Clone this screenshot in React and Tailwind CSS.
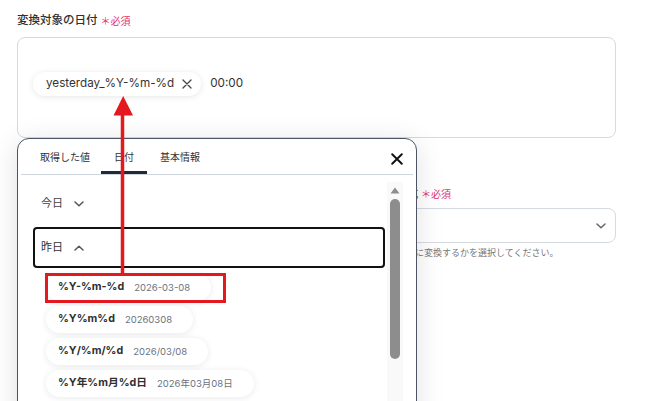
import React from "react";

const Chevron = ({ up = false, className = "" }) => (
  <svg width="10" height="6" viewBox="0 0 10 6" fill="none" className={className}>
    <path
      d={up ? "M1 5L5 1.2L9 5" : "M1 1L5 4.8L9 1"}
      stroke="currentColor"
      strokeWidth="1.5"
      strokeLinecap="round"
      strokeLinejoin="round"
    />
  </svg>
);

const XIcon = ({ size = 10, sw = 1.4, className = "" }) => (
  <svg width={size} height={size} viewBox="0 0 10 10" fill="none" className={className}>
    <path d="M1 1L9 9M9 1L1 9" stroke="currentColor" strokeWidth={sw} strokeLinecap="round" />
  </svg>
);

const items = [
  ["%Y-%m-%d", "2026-03-08"],
  ["%Y%m%d", "20260308"],
  ["%Y/%m/%d", "2026/03/08"],
  ["%Y年%m月%d日", "2026年03月08日"],
];

export default function App() {
  return (
    <div className="relative w-[664px] h-[401px] overflow-hidden bg-white font-['Inter','Noto_Sans_CJK_JP',sans-serif] text-[#333]">
      {/* background form */}
      <div className="pl-[17px] pt-[13px]">
        <div className="flex items-center h-[16px] gap-[3px]">
          <span className="text-[11.5px] font-medium text-[#2f2f2f] leading-none">変換対象の日付</span>
          <span className="text-[10px] text-[#e5336c] leading-none">＊必須</span>
        </div>
        <div className="mt-[8px] w-[599px] h-[101px] rounded-[8px] border border-[#d5d9e0] flex items-start pt-[34px] pl-[15px]">
          <div className="flex items-center h-[24px] rounded-full bg-white pl-[13px] pr-[9px] shadow-[0_1px_6px_rgba(0,0,0,0.1)]">
            <span className="text-[11.7px] leading-none text-[#333]">yesterday_%Y-%m-%d</span>
            <XIcon size={10} sw={1.3} className="ml-[8px] text-[#444]" />
          </div>
          <span className="ml-[9px] h-[24px] flex items-center text-[11.7px] leading-none text-[#333]">00:00</span>
        </div>

        <div className="mt-[48px] flex items-center h-[16px] gap-[3px] pl-[313px]">
          <span className="text-[11px] font-medium text-[#333] leading-none">変換後の日付形式</span>
          <span className="text-[10px] text-[#e5336c] leading-none">＊必須</span>
        </div>
        <div className="mt-[6px] w-[599px] h-[35px] rounded-[8px] border border-[#d5d9e0] flex items-center justify-end pr-[9px]">
          <Chevron className="text-[#666]" />
        </div>
        <div className="mt-[5px] pl-[335px] text-[9px] leading-[10px] text-[#777]">
          日付をどの形式に変換するかを選択してください。
        </div>
      </div>

      {/* popup */}
      <div className="absolute left-[17px] top-[138px] w-[400px] h-[290px] rounded-[12px] border border-[#4b5563] bg-white shadow-[0_4px_28px_rgba(0,0,0,0.12)]">
        <div className="flex h-[35px] pl-[9px] pt-[5px]">
          <div className="w-[74px] pl-[13px] flex items-center border-b-[3px] border-transparent text-[10px] text-[#333]">
            取得した値
          </div>
          <div className="w-[46px] flex items-center justify-center border-b-[3px] border-[#1f2937] text-[10px] text-[#333]">
            日付
          </div>
          <div className="pl-[13px] flex items-center border-b-[3px] border-transparent text-[10px] text-[#333]">
            基本情報
          </div>
        </div>
        <div className="mx-[3px] h-px bg-[#cfd5dd]" />
        <div className="absolute right-[13px] top-[14px] text-[#111]">
          <XIcon size={12} sw={1.6} />
        </div>

        <div className="flex">
          <div className="w-[352px] ml-[15px] pt-[8px]">
            <div className="h-[41px] rounded-[4px] border-2 border-transparent px-[6px] flex items-center gap-[11px]">
              <span className="text-[11px] text-[#444] leading-none">今日</span>
              <Chevron className="text-[#555]" />
            </div>
            <div className="mt-[3px] h-[41px] rounded-[4px] border-2 border-[#111] px-[6px] flex items-center gap-[11px]">
              <span className="text-[11px] text-[#333] leading-none">昨日</span>
              <Chevron up className="text-[#555]" />
            </div>
            <div className="mt-[6px] ml-[13px] flex flex-col items-start gap-[5px]">
              {items.map(([fmt, val]) => (
                <div
                  key={fmt}
                  className="h-[27px] flex items-center rounded-full bg-white pl-[12px] pr-[21px] gap-[10px] shadow-[0_1px_7px_rgba(0,0,0,0.09)]"
                >
                  <span className="text-[10.7px] font-bold text-[#2f2f2f] leading-none">{fmt}</span>
                  <span className="text-[9.5px] text-[#6b7280] leading-none">{val}</span>
                </div>
              ))}
            </div>
          </div>
          <div className="ml-[2px] mt-[7px] w-[16px] h-[260px] bg-[#f9f9f9] flex flex-col items-center pt-[5px]">
            <svg width="10" height="7" viewBox="0 0 10 7">
              <path d="M5 0.5L9.5 6.5H0.5Z" fill="#8d8d8d" />
            </svg>
            <div className="mt-[5px] w-[10px] h-[160px] rounded-[5px] bg-[#8d8d8d]" />
          </div>
        </div>
      </div>

      {/* annotation */}
      <svg className="absolute left-0 top-0 pointer-events-none" width="664" height="401" viewBox="0 0 664 401">
        <line x1="122.5" y1="112" x2="122.5" y2="274" stroke="#e3191f" strokeWidth="3.5" />
        <polygon points="113.5,115.5 133,115.5 123.2,96" fill="#e3191f" />
        <rect x="46.5" y="274.5" width="178" height="27" fill="none" stroke="#e3191f" strokeWidth="3" />
      </svg>
    </div>
  );
}
